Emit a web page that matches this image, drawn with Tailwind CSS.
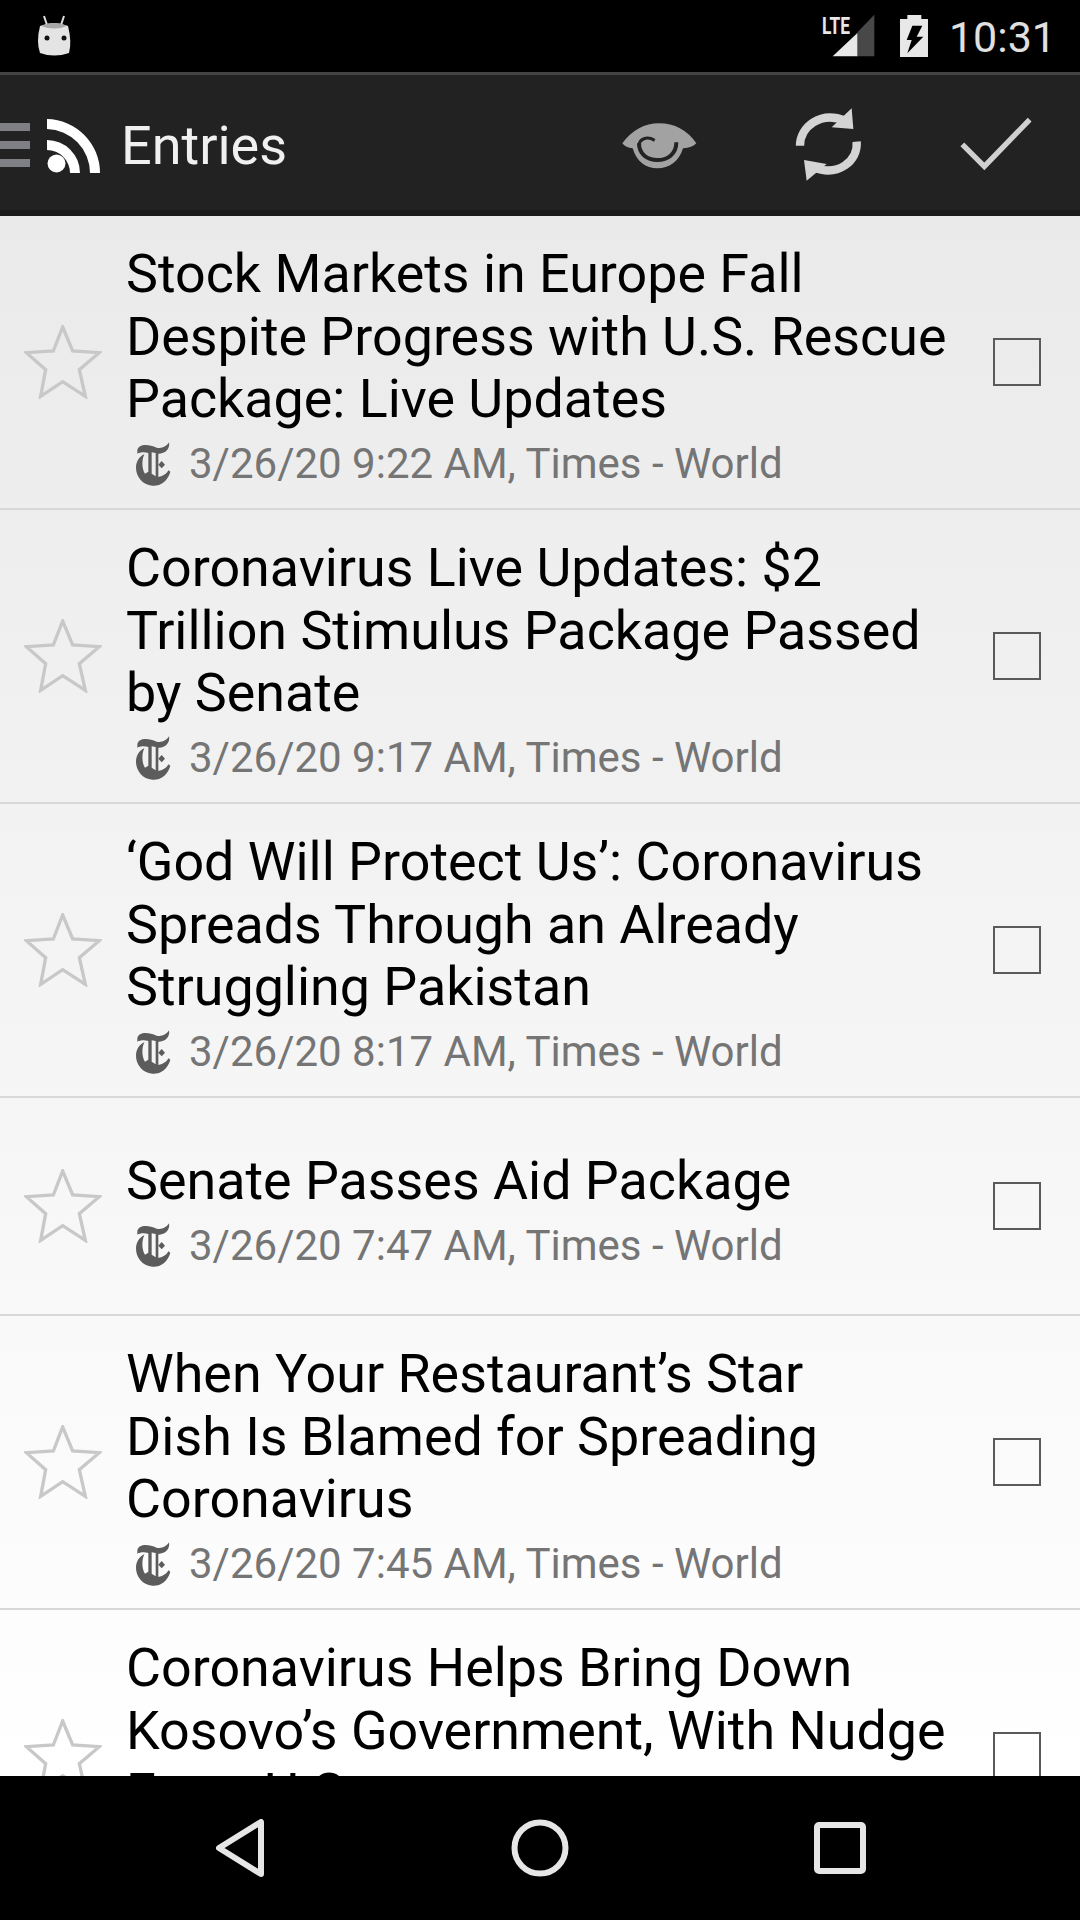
<!DOCTYPE html>
<html lang="en">
  <head>
    <meta charset="UTF-8" />
    <title>Entries</title>
    <script src="https://cdn.jsdelivr.net/npm/@tailwindcss/browser@4"></script>
  </head>
  <body class="bg-black">
    <div class="w-[1080px] h-[1920px] flex flex-col overflow-hidden font-['Roboto',sans-serif]">
      <!-- Status bar -->
      <div class="h-[72px] shrink-0 bg-black flex items-center">
        <svg class="ml-[36px] w-[36px] h-[44px]" viewBox="0 0 36 44">
          <path d="M8 2 L11 11 M28 2 L25 11" stroke="#dddddd" stroke-width="2" />
          <path d="M4 12 Q18 6 32 12 Q36 28 33 39 Q18 44 4 39 Q0 28 4 12 Z" fill="#e4e4e4" />
          <path d="M5 12 Q18 6 31 12 Q18 17 5 12 Z" fill="#a8a8a8" />
          <circle cx="11" cy="24" r="2.5" fill="#111111" />
          <circle cx="28" cy="24" r="2.5" fill="#111111" />
        </svg>
        <div class="ml-auto relative w-[53.3px] h-[43.3px]">
          <span class="absolute left-0 top-0 text-[24px] leading-[24px] font-bold text-[#e8e8e8] origin-top-left scale-x-[0.72]">LTE</span>
          <svg class="w-[53.3px] h-[43.3px]" viewBox="33 28 160 130">
            <path d="M65 155 L140 84 V155 Z" fill="#e8e8e8" />
            <path d="M140 82 L190 30 V155 H140 Z" fill="#484848" />
          </svg>
        </div>
        <svg class="ml-[25px] w-[28px] h-[42.3px]" viewBox="268 30 84 127">
          <path d="M268 42 H290 V30 H332 V42 H352 V157 H268 Z" fill="#e8e8e8" />
          <path d="M305 62 H335 L318 95 H338 L290 145 L303 105 H288 Z" fill="#000000" />
        </svg>
        <span class="ml-[21px] mr-[24px] mt-[2px] text-[43px] leading-none text-[#e0e0e0]">10:31</span>
      </div>

      <!-- Action bar -->
      <div class="h-[144px] shrink-0 bg-[#222222] border-t-[3px] border-t-[#444444] border-b-[6px] border-b-[#1a1a1a] flex items-center">
        <div class="w-[30px] flex flex-col gap-[10px] mt-[5px]">
          <div class="h-[8px] bg-[#7f8085]"></div>
          <div class="h-[8px] bg-[#7f8085]"></div>
          <div class="h-[8px] bg-[#7f8085]"></div>
        </div>
        <svg class="ml-[17px] mt-[7px] w-[54px] h-[54px]" viewBox="0 0 54 54">
          <circle cx="9.5" cy="44.5" r="9" fill="#ffffff" />
          <path d="M0 21 A33 33 0 0 1 33 54 H23 A23 23 0 0 0 0 31 Z" fill="#ffffff" />
          <path d="M0 0 A54 54 0 0 1 53 54 H43 A44 44 0 0 0 0 10 Z" fill="#ffffff" />
        </svg>
        <span class="ml-[20px] mt-[7px] text-[54px] leading-none text-[#f0f0f0]">Entries</span>
        <svg class="ml-[327px] mt-[5px] w-[90px] h-[60px]" viewBox="0 0 270 180">
          <path d="M25 85 Q70 25 135 25 Q205 25 247 85 Q235 98 207 100 C195 140 165 160 130 160 C95 160 68 140 56 100 Q35 98 25 85 Z" fill="#a2a2a2" />
          <path d="M75 85 C75 118 100 135 130 135 C160 135 187 118 187 82" fill="none" stroke="#222222" stroke-width="12" />
          <path d="M75 92 C76 72 98 62 122 76" fill="none" stroke="#222222" stroke-width="9" />
        </svg>
        <svg class="ml-[91px] mt-[5px] w-[68px] h-[74px]" viewBox="645 327 204 222">
          <path d="M660 440 C660 385 720 335 795 365" fill="none" stroke="#d4d4d4" stroke-width="25" />
          <path d="M815 328 L820 390 L755 385 Z" fill="#d4d4d4" />
          <path d="M830 428 C835 485 775 535 700 505" fill="none" stroke="#d4d4d4" stroke-width="25" />
          <path d="M672 483 L680 545 L740 495 Z" fill="#d4d4d4" />
        </svg>
        <svg class="ml-[97px] mt-[3px] w-[72px] h-[54px]" viewBox="1140 350 216 162">
          <path d="M1147 432 L1213 498 L1349 358" fill="none" stroke="#d0d0d0" stroke-width="16" />
        </svg>
      </div>

      <!-- Entry list -->
      <div class="h-[1560px] overflow-hidden bg-linear-to-b from-[#eaeaea] to-white">
        <div class="flex items-center min-h-[218px] border-b-2 border-[#d8d8d8]">
          <div class="w-[126px] shrink-0 flex justify-center">
            <svg class="w-[78px] h-[74px]" viewBox="72 78 234 222"><path d="M188 84 L218 156 L298 161 L238 212 L256 292 L188 248 L122 292 L137 212 L79 161 L160 156 Z" fill="none" stroke="#c8c8c8" stroke-width="10" /></svg>
          </div>
          <div class="flex-1 min-w-0 pt-[27.4px] pb-[13.4px]">
            <div class="text-[53.8px] leading-[62.4px] text-black whitespace-nowrap">Stock Markets in Europe Fall<br />Despite Progress with U.S. Rescue<br />Package: Live Updates</div>
            <div class="flex items-center h-[64px]">
              <svg class="-ml-[1px] w-[60px] h-[60px]" viewBox="0 0 180 180"><path d="M37 52 C40 32 70 32 95 44 C110 48 125 40 132 28 C136 45 122 64 100 62 L100 132 C112 130 124 124 130 112 L136 116 C128 145 105 160 82 158 C52 156 32 130 33 102 C34 84 44 70 58 64 C50 80 50 108 60 122 L70 116 L70 60 C58 56 44 58 37 62 Z M80 58 L80 122 L92 130 L92 60 Z" fill="#5c5c5c" fill-rule="evenodd" /><path d="M110 84 L120 95 L110 106 L100 95 Z" fill="#5c5c5c" /></svg>
              <span class="ml-[4px] mt-[2px] text-[42px] text-[#757575]">3/26/20 9:22 AM, Times - World</span>
            </div>
          </div>
          <div class="w-[120px] shrink-0 pl-[33px]"><div class="w-[48px] h-[48px] border-2 border-[#5a5a5a]"></div></div>
        </div>

        <div class="flex items-center min-h-[218px] border-b-2 border-[#d8d8d8]">
          <div class="w-[126px] shrink-0 flex justify-center">
            <svg class="w-[78px] h-[74px]" viewBox="72 78 234 222"><path d="M188 84 L218 156 L298 161 L238 212 L256 292 L188 248 L122 292 L137 212 L79 161 L160 156 Z" fill="none" stroke="#c8c8c8" stroke-width="10" /></svg>
          </div>
          <div class="flex-1 min-w-0 pt-[27.4px] pb-[13.4px]">
            <div class="text-[53.8px] leading-[62.4px] text-black whitespace-nowrap">Coronavirus Live Updates: $2<br />Trillion Stimulus Package Passed<br />by Senate</div>
            <div class="flex items-center h-[64px]">
              <svg class="-ml-[1px] w-[60px] h-[60px]" viewBox="0 0 180 180"><path d="M37 52 C40 32 70 32 95 44 C110 48 125 40 132 28 C136 45 122 64 100 62 L100 132 C112 130 124 124 130 112 L136 116 C128 145 105 160 82 158 C52 156 32 130 33 102 C34 84 44 70 58 64 C50 80 50 108 60 122 L70 116 L70 60 C58 56 44 58 37 62 Z M80 58 L80 122 L92 130 L92 60 Z" fill="#5c5c5c" fill-rule="evenodd" /><path d="M110 84 L120 95 L110 106 L100 95 Z" fill="#5c5c5c" /></svg>
              <span class="ml-[4px] mt-[2px] text-[42px] text-[#757575]">3/26/20 9:17 AM, Times - World</span>
            </div>
          </div>
          <div class="w-[120px] shrink-0 pl-[33px]"><div class="w-[48px] h-[48px] border-2 border-[#5a5a5a]"></div></div>
        </div>

        <div class="flex items-center min-h-[218px] border-b-2 border-[#d8d8d8]">
          <div class="w-[126px] shrink-0 flex justify-center">
            <svg class="w-[78px] h-[74px]" viewBox="72 78 234 222"><path d="M188 84 L218 156 L298 161 L238 212 L256 292 L188 248 L122 292 L137 212 L79 161 L160 156 Z" fill="none" stroke="#c8c8c8" stroke-width="10" /></svg>
          </div>
          <div class="flex-1 min-w-0 pt-[27.4px] pb-[13.4px]">
            <div class="text-[53.8px] leading-[62.4px] text-black whitespace-nowrap">‘God Will Protect Us’: Coronavirus<br />Spreads Through an Already<br />Struggling Pakistan</div>
            <div class="flex items-center h-[64px]">
              <svg class="-ml-[1px] w-[60px] h-[60px]" viewBox="0 0 180 180"><path d="M37 52 C40 32 70 32 95 44 C110 48 125 40 132 28 C136 45 122 64 100 62 L100 132 C112 130 124 124 130 112 L136 116 C128 145 105 160 82 158 C52 156 32 130 33 102 C34 84 44 70 58 64 C50 80 50 108 60 122 L70 116 L70 60 C58 56 44 58 37 62 Z M80 58 L80 122 L92 130 L92 60 Z" fill="#5c5c5c" fill-rule="evenodd" /><path d="M110 84 L120 95 L110 106 L100 95 Z" fill="#5c5c5c" /></svg>
              <span class="ml-[4px] mt-[2px] text-[42px] text-[#757575]">3/26/20 8:17 AM, Times - World</span>
            </div>
          </div>
          <div class="w-[120px] shrink-0 pl-[33px]"><div class="w-[48px] h-[48px] border-2 border-[#5a5a5a]"></div></div>
        </div>

        <div class="flex items-center min-h-[218px] border-b-2 border-[#d8d8d8]">
          <div class="w-[126px] shrink-0 flex justify-center">
            <svg class="w-[78px] h-[74px]" viewBox="72 78 234 222"><path d="M188 84 L218 156 L298 161 L238 212 L256 292 L188 248 L122 292 L137 212 L79 161 L160 156 Z" fill="none" stroke="#c8c8c8" stroke-width="10" /></svg>
          </div>
          <div class="flex-1 min-w-0 pt-[27.4px] pb-[13.4px]">
            <div class="text-[53.8px] leading-[62.4px] text-black whitespace-nowrap">Senate Passes Aid Package</div>
            <div class="flex items-center h-[64px]">
              <svg class="-ml-[1px] w-[60px] h-[60px]" viewBox="0 0 180 180"><path d="M37 52 C40 32 70 32 95 44 C110 48 125 40 132 28 C136 45 122 64 100 62 L100 132 C112 130 124 124 130 112 L136 116 C128 145 105 160 82 158 C52 156 32 130 33 102 C34 84 44 70 58 64 C50 80 50 108 60 122 L70 116 L70 60 C58 56 44 58 37 62 Z M80 58 L80 122 L92 130 L92 60 Z" fill="#5c5c5c" fill-rule="evenodd" /><path d="M110 84 L120 95 L110 106 L100 95 Z" fill="#5c5c5c" /></svg>
              <span class="ml-[4px] mt-[2px] text-[42px] text-[#757575]">3/26/20 7:47 AM, Times - World</span>
            </div>
          </div>
          <div class="w-[120px] shrink-0 pl-[33px]"><div class="w-[48px] h-[48px] border-2 border-[#5a5a5a]"></div></div>
        </div>

        <div class="flex items-center min-h-[218px] border-b-2 border-[#d8d8d8]">
          <div class="w-[126px] shrink-0 flex justify-center">
            <svg class="w-[78px] h-[74px]" viewBox="72 78 234 222"><path d="M188 84 L218 156 L298 161 L238 212 L256 292 L188 248 L122 292 L137 212 L79 161 L160 156 Z" fill="none" stroke="#c8c8c8" stroke-width="10" /></svg>
          </div>
          <div class="flex-1 min-w-0 pt-[27.4px] pb-[13.4px]">
            <div class="text-[53.8px] leading-[62.4px] text-black whitespace-nowrap">When Your Restaurant’s Star<br />Dish Is Blamed for Spreading<br />Coronavirus</div>
            <div class="flex items-center h-[64px]">
              <svg class="-ml-[1px] w-[60px] h-[60px]" viewBox="0 0 180 180"><path d="M37 52 C40 32 70 32 95 44 C110 48 125 40 132 28 C136 45 122 64 100 62 L100 132 C112 130 124 124 130 112 L136 116 C128 145 105 160 82 158 C52 156 32 130 33 102 C34 84 44 70 58 64 C50 80 50 108 60 122 L70 116 L70 60 C58 56 44 58 37 62 Z M80 58 L80 122 L92 130 L92 60 Z" fill="#5c5c5c" fill-rule="evenodd" /><path d="M110 84 L120 95 L110 106 L100 95 Z" fill="#5c5c5c" /></svg>
              <span class="ml-[4px] mt-[2px] text-[42px] text-[#757575]">3/26/20 7:45 AM, Times - World</span>
            </div>
          </div>
          <div class="w-[120px] shrink-0 pl-[33px]"><div class="w-[48px] h-[48px] border-2 border-[#5a5a5a]"></div></div>
        </div>

        <div class="flex items-center min-h-[218px] border-b-2 border-[#d8d8d8]">
          <div class="w-[126px] shrink-0 flex justify-center">
            <svg class="w-[78px] h-[74px]" viewBox="72 78 234 222"><path d="M188 84 L218 156 L298 161 L238 212 L256 292 L188 248 L122 292 L137 212 L79 161 L160 156 Z" fill="none" stroke="#c8c8c8" stroke-width="10" /></svg>
          </div>
          <div class="flex-1 min-w-0 pt-[27.4px] pb-[13.4px]">
            <div class="text-[53.8px] leading-[62.4px] text-black whitespace-nowrap">Coronavirus Helps Bring Down<br />Kosovo’s Government, With Nudge<br />From U.S.</div>
            <div class="h-[64px]"></div>
          </div>
          <div class="w-[120px] shrink-0 pl-[33px]"><div class="w-[48px] h-[48px] border-2 border-[#5a5a5a]"></div></div>
        </div>
      </div>

      <!-- Navigation bar -->
      <div class="h-[144px] shrink-0 bg-black relative flex items-center">
        <svg class="ml-[216px] w-[50px] h-[58px]" viewBox="0 0 50 58">
          <path d="M45 3 V55 L3 29 Z" fill="none" stroke="#e6e6e6" stroke-width="6" stroke-linejoin="round" />
        </svg>
        <svg class="ml-[245px] w-[58px] h-[58px]" viewBox="0 0 58 58">
          <circle cx="29" cy="29" r="25.5" fill="none" stroke="#e6e6e6" stroke-width="6" />
        </svg>
        <svg class="ml-[245px] w-[52px] h-[52px]" viewBox="0 0 52 52">
          <rect x="3" y="3" width="46" height="46" rx="2" fill="none" stroke="#e6e6e6" stroke-width="6" />
        </svg>
      </div>
    </div>
  </body>
</html>
